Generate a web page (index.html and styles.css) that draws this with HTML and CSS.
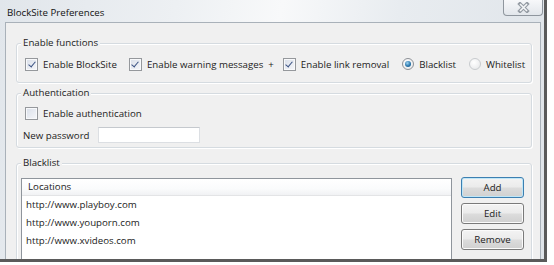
FILE: index.html
```html
<!DOCTYPE html>
<html lang="en">
<head>
  <meta charset="UTF-8" />
  <title>BlockSite Preferences</title>
  <link rel="stylesheet" href="styles.css">
</head>
<body>

  <div class="window">
    <div class="titlebar">
      <span class="title">BlockSite Preferences</span>
      <div class="close">
        <svg width="13" height="11" viewBox="0 0 13 11">
          <path d="M3 2 L10 9 M10 2 L3 9" stroke="#949ba3" stroke-width="3.8" stroke-linecap="square" fill="none"/>
          <path d="M3 2 L10 9 M10 2 L3 9" stroke="#f5f6f8" stroke-width="1.6" stroke-linecap="butt" fill="none"/>
        </svg>
      </div>
    </div>

    <div class="client">
      <fieldset class="group group-functions">
        <legend>Enable functions</legend>
        <div class="row">
          <label class="opt opt-blocksite"><span class="box checked"></span>Enable BlockSite</label>
          <label class="opt opt-warning"><span class="box checked"></span>Enable warning messages</label>
          <span class="plus">+</span>
          <label class="opt opt-link"><span class="box checked"></span>Enable link removal</label>
          <label class="opt opt-black"><span class="radio on"></span>Blacklist</label>
          <label class="opt opt-white"><span class="radio"></span>Whitelist</label>
        </div>
      </fieldset>

      <fieldset class="group group-auth">
        <legend>Authentication</legend>
        <div class="row">
          <label class="opt"><span class="box"></span>Enable authentication</label>
        </div>
        <div class="row row-password">
          <span class="field-label">New password</span>
          <input type="password" class="password" />
        </div>
      </fieldset>

      <fieldset class="group group-list">
        <legend>Blacklist</legend>
        <div class="list-wrap">
          <div class="list">
            <div class="list-head">Locations</div>
            <div class="list-item">http://www.playboy.com</div>
            <div class="list-item">http://www.youporn.com</div>
            <div class="list-item">http://www.xvideos.com</div>
          </div>
          <div class="buttons">
            <button class="btn btn-default">Add</button>
            <button class="btn">Edit</button>
            <button class="btn">Remove</button>
          </div>
        </div>
      </fieldset>
    </div>
  </div>

</body>
</html>
```

FILE: styles.css
```css
* {
  box-sizing: border-box;
}

body {
  margin: 0;
  background: #fff;
  font-family: 'Open Sans', 'Segoe UI', sans-serif;
  font-size: 9.7px;
  color: #222;
}

.window {
  width: 547px;
  height: 262px;
  border-right: 3px solid #5a5a5a;
  border-bottom: 3px solid #5a5a5a;
  background: linear-gradient(100deg, #e1e6eb 0%, #edf0f3 30%, #f8f9fa 48%, #e8ecf0 68%, #dfe4e9 100%);
  display: flex;
  flex-direction: column;
  overflow: hidden;
}

.titlebar {
  height: 22px;
  display: flex;
  align-items: flex-start;
  padding: 0 1px 0 7px;
}

.title {
  margin-top: 6px;
  line-height: 14px;
  color: #111;
}

.close {
  margin-left: auto;
  width: 40px;
  height: 16px;
  border: 1px solid #8f969e;
  border-top: none;
  border-radius: 0 0 4px 4px;
  background: linear-gradient(#f7f8fa, #e2e6eb);
  display: flex;
  align-items: center;
  justify-content: center;
}

.client {
  flex: 1;
  margin: 0 3px 0 5px;
  padding: 0 8px 0 10px;
  background: #f0f0f0;
  border: 1px solid #a9b1b9;
  border-bottom: none;
  overflow: hidden;
}

.group {
  margin: 0;
  padding: 0 5px 0 4px;
  border: 1px solid #d5dbe0;
  border-radius: 3px;
  box-shadow: inset 1px 1px 0 #fff, 1px 1px 0 #fff;
}

.group legend {
  padding: 0 2px;
  line-height: 14px;
  background: #f0f0f0;
}

.group-functions {
  margin-top: 13px;
  padding-top: 6px;
  padding-bottom: 10px;
}

.group-auth {
  margin-top: 3px;
  padding-top: 5px;
  padding-bottom: 4px;
}

.group-list {
  margin-top: 8px;
  padding-top: 8px;
  height: 200px;
}

.row {
  height: 16px;
  display: flex;
  align-items: center;
  padding-left: 4px;
}

.opt {
  display: flex;
  align-items: center;
  gap: 5px;
  white-space: nowrap;
}

.opt-warning {
  margin-left: 12px;
}

.plus {
  margin-left: 5px;
}

.opt-link {
  margin-left: 9px;
}

.opt-black {
  margin-left: 13px;
}

.opt-white {
  margin-left: 13px;
}

.box {
  width: 13px;
  height: 13px;
  border: 1px solid #95989c;
  background: linear-gradient(135deg, #d9dfe9, #f6f7fa);
  box-shadow: inset 0 0 0 1px #f8f9fb;
  position: relative;
}

.box.checked::after {
  content: "";
  position: absolute;
  left: 3.5px;
  top: 1px;
  width: 3px;
  height: 6px;
  border: solid #3a5283;
  border-width: 0 1.5px 1.5px 0;
  transform: rotate(40deg);
}

.radio {
  width: 12px;
  height: 12px;
  border-radius: 50%;
  border: 1px solid #c8cbce;
  background: radial-gradient(circle at 40% 35%, #fff, #e4e5e7);
  position: relative;
}

.radio.on {
  border-color: #8c9096;
}

.radio.on::after {
  content: "";
  position: absolute;
  left: 2px;
  top: 2px;
  width: 6px;
  height: 6px;
  border-radius: 50%;
  background: radial-gradient(circle at 40% 35%, #9fd4f2, #2a77ad 55%, #134f7c);
}

.row-password {
  margin-top: 6px;
  padding-left: 2px;
}

.field-label {
  width: 75px;
}

.password {
  width: 102px;
  height: 16px;
  border: 1px solid #dcdfe3;
  border-top-color: #c5c9ce;
  background: #fff;
  padding: 0;
}

.list-wrap {
  display: flex;
  align-items: flex-start;
}

.list {
  width: 431px;
  height: 110px;
  background: #fff;
  border: 1px solid #8f959c;
}

.list-head {
  height: 17px;
  line-height: 16px;
  padding-left: 6px;
  border-bottom: 1px solid #e3e4e6;
  background: linear-gradient(#fff, #fafbfc 60%, #f1f2f4);
}

.list-item {
  height: 18px;
  line-height: 18px;
  padding-left: 4px;
}

.buttons {
  margin-left: 9px;
  margin-top: -1px;
  display: flex;
  flex-direction: column;
  gap: 5px;
}

.btn {
  width: 63px;
  height: 21px;
  padding: 0;
  font-family: inherit;
  font-size: inherit;
  color: #222;
  border: 1px solid #7a7a7a;
  border-radius: 3px;
  background: linear-gradient(#f3f3f3, #ebebeb 48%, #dcdcdc 52%, #d0d0d0);
  box-shadow: inset 0 0 0 1px #fbfbfb;
}

.btn-default {
  border-color: #3c7fb1;
  box-shadow: inset 0 0 0 1px #bfe6f7;
}
```
